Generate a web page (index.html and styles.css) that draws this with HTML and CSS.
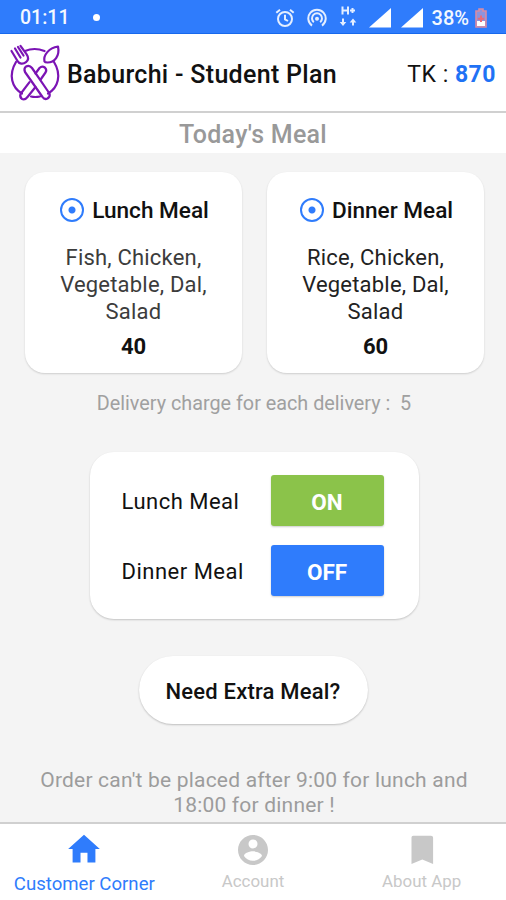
FILE: index.html
```html
<!DOCTYPE html>
<html lang="en">
<head>
    <meta charset="UTF-8">
    <meta name="viewport" content="width=device-width, initial-scale=1.0">
    <title>Baburchi - Student Plan</title>
    <link rel="stylesheet" href="styles.css">
</head>
<body>
    <div class="status-bar">
        <span class="time">01:11</span>
        <span class="dot"></span>
        <div class="status-icons">
            <svg class="alarm" width="20" height="20" viewBox="0 0 20 20" fill="none" stroke="#e4eeff" stroke-width="2">
                <circle cx="10" cy="11" r="7"/>
                <path d="M10 6.8V11.3L13 13M1.3 4.8L5 1.7M18.7 4.8L15 1.7"/>
            </svg>
            <svg class="hotspot" width="20" height="20" viewBox="0 0 20 20" fill="none" stroke="#e4eeff" stroke-width="2">
                <path d="M5 17.6A8.7 8.7 0 1 1 15 17.6"/>
                <path d="M6.8 14.2A5 5 0 1 1 13.2 14.2"/>
                <circle cx="10" cy="10.8" r="2" fill="#e4eeff" stroke="none"/>
            </svg>
            <svg class="network" width="20" height="22" viewBox="0 0 20 22" fill="none" stroke="#e4eeff" stroke-width="2">
                <path d="M4.5 1.5V9.500M10 1.5V9.500M4.500 5.500H10M12 5.500H17M14.500 3V8"/>
                <path d="M5 13.500V18M15 20.500V15"/>
                <path d="M1.700 17H8.300L5 21ZM11.700 17.500H18.300L15 13.500Z" fill="#e4eeff" stroke="none"/>
            </svg>
            <svg class="signal" width="22" height="20" viewBox="0 0 22 20">
                <path d="M0 19.500L22 0V19.500Z" fill="#fff"/>
            </svg>
            <svg class="signal" width="22" height="20" viewBox="0 0 22 20">
                <path d="M0 19.500L22 0V19.500Z" fill="#fff"/>
            </svg>
            <span class="percent">38%</span>
            <svg class="battery" width="12" height="20" viewBox="0 0 12 20">
                <path d="M1 3H4V1H8V3H11V19H1Z" fill="#8f93dc" stroke="#d98ba3" stroke-width="1.600"/>
                <path d="M2 13H10V18H2Z" fill="#fff"/>
                <path d="M6 7.500V14M2.800 10.700H9.200" stroke="#e96b78" stroke-width="2"/>
            </svg>
        </div>
    </div>

    <header class="header">
        <svg class="logo" width="52" height="58" viewBox="0 0 52 58" fill="none" stroke="#7b14b4" stroke-width="2.2" stroke-linecap="round" stroke-linejoin="round">
            <path d="M16 7Q25.500 3 35.500 7M7 18C-1 31 3 44 13 49.500M45 18C53 31 49 44 39 49.500M22 52.500Q26 53.500 31 52.500"/>
            <path d="M2.500 7L8.500 17C10 20 14 20.500 17 18.200C19.500 16.200 19.500 13 17.500 10.200L11.500 1.800M6 4.500L11.500 13.500M9 3L14.500 11.500"/>
            <path d="M35.500 17.500C34 11 40 4 49 2.500C51 12 45.500 18.500 38.500 18.500C37 18.500 36 18.500 35.500 17.500Z"/>
            <path d="M17 22.500Q20.500 20.500 23 24L40.500 49.500Q41.500 52.500 38.500 54.500Q35.500 56 33.500 53L16 28Q14.500 24.500 17 22.500Z"/>
            <path d="M26.500 29.500L30.500 24Q33 21.500 35.800 23.500Q38.300 26 36.500 28.500L32 35M20.500 38.200L11.500 50Q10.500 53 13 55Q16 56.300 18.500 53L26.500 43"/>
        </svg>
        <h1>Baburchi - Student Plan</h1>
        <div class="balance">TK : <b>870</b></div>
    </header>

    <h2 class="section-title"><span>Today's Meal</span></h2>

    <main>
        <div class="meals">
            <div class="meal-card">
                <h3><i class="radio"></i><span>Lunch Meal</span></h3>
                <p class="items">Fish, Chicken,<br>Vegetable, Dal,<br>Salad</p>
                <p class="price">40</p>
            </div>
            <div class="meal-card dinner">
                <h3><i class="radio"></i><span>Dinner Meal</span></h3>
                <p class="items">Rice, Chicken,<br>Vegetable, Dal,<br>Salad</p>
                <p class="price">60</p>
            </div>
        </div>

        <p class="delivery">Delivery charge for each delivery : &nbsp;5</p>

        <div class="switches">
            <div class="switch-row">
                <span>Lunch Meal</span>
                <button class="btn on">ON</button>
            </div>
            <div class="switch-row">
                <span>Dinner Meal</span>
                <button class="btn off">OFF</button>
            </div>
        </div>

        <button class="extra">Need Extra Meal?</button>

        <p class="notice">Order can't be placed after 9:00 for lunch and<br>18:00 for dinner !</p>
    </main>

    <nav class="tabs">
        <a class="tab active">
            <svg width="38" height="34" viewBox="0 0 24 24" preserveAspectRatio="none" fill="currentColor"><path d="M9.800 21.500v-6.800h4.400v6.800h5v-9.500h2.800L12 2 2 12h2.800v9.500z"/></svg>
            <span>Customer Corner</span>
        </a>
        <a class="tab">
            <svg width="36" height="36" viewBox="0 0 24 24" fill="currentColor"><path d="M12 2C6.480 2 2 6.480 2 12s4.480 10 10 10 10-4.480 10-10S17.520 2 12 2zm0 3c1.660 0 3 1.340 3 3s-1.340 3-3 3-3-1.340-3-3 1.340-3 3-3zm0 14.200c-2.500 0-4.710-1.280-6-3.220.030-1.990 4-3.080 6-3.080 1.990 0 5.970 1.090 6 3.080-1.290 1.940-3.500 3.220-6 3.220z"/></svg>
            <span>Account</span>
        </a>
        <a class="tab">
            <svg width="36" height="36" viewBox="0 0 24 24" fill="currentColor"><path d="M18 2.500H6.200c-.8 0-1.200.5-1.200 1.300V21.300l7.200-3 7.200 3V3.800c0-.8-.6-1.300-1.400-1.300z"/></svg>
            <span>About App</span>
        </a>
    </nav>
</body>
</html>
```
FILE: styles.css
```css
* {
    box-sizing: border-box;
}

body {
    display: flex;
    flex-direction: column;
    height: 900px;
    margin: 0;
    overflow: hidden;
    font-family: Roboto, sans-serif;
    background: #f4f4f4;
    color: #111;
    white-space: nowrap;
}

h1, h2, h3, p {
    margin: 0;
}

.status-bar {
    display: flex;
    align-items: center;
    height: 34px;
    padding: 2px 19px 0 20px;
    background: #2f7cfc;
    border-bottom: 1px solid #1768ec;
    color: #f3f8ff;
    font-size: 19.5px;
    font-weight: 500;
}

.dot {
    width: 7px;
    height: 7px;
    margin-left: 24px;
    border-radius: 50%;
    background: #fff;
}

.status-icons {
    display: flex;
    align-items: center;
    margin-left: auto;
}

.hotspot {
    margin-left: 12px;
}

.network {
    margin: -3px 0 0 11px;
}

.signal {
    margin-left: 10px;
}

.network + .signal {
    margin-left: 11px;
}

.percent {
    margin: 0 6px 0 9px;
    font-size: 20px;
}

.header {
    display: flex;
    align-items: center;
    height: 79px;
    padding: 0 10px 0 9px;
    background: #fff;
    border-bottom: 2px solid #d0d0d0;
}

.header h1 {
    margin: 3px 0 0 6px;
    font-size: 25px;
    font-weight: 500;
    letter-spacing: 0.3px;
}

.balance {
    margin: 3px 0 0 auto;
    font-size: 23px;
    letter-spacing: 0.5px;
}

.balance b {
    color: #1f72f5;
}

.section-title {
    height: 40px;
    background: #fff;
    color: #999;
    font-size: 25px;
    font-weight: 500;
    letter-spacing: 0.25px;
    line-height: 43px;
    text-align: center;
}

main {
    flex: 1;
    display: flex;
    flex-direction: column;
    align-items: center;
}

.meals {
    display: flex;
    gap: 25px;
    margin: 19px 0 0 3px;
}

.meal-card {
    width: 217px;
    height: 201px;
    padding-top: 22px;
    border-radius: 20px;
    background: #fff;
    box-shadow: 0 1px 2px rgba(0, 0, 0, 0.16);
    text-align: center;
}

.meal-card h3 {
    display: flex;
    align-items: center;
    justify-content: center;
    gap: 8px;
    height: 32px;
    padding-left: 2px;
    font-size: 22.6px;
    font-weight: 500;
}

.radio {
    width: 24px;
    height: 24px;
    border: 2px solid #2f7cfc;
    border-radius: 50%;
    background: radial-gradient(circle, #2f7cfc 3px, transparent 4px);
}

.items {
    margin-top: 19px;
    color: #3c3c3c;
    font-size: 22px;
    letter-spacing: 0.2px;
    line-height: 26.8px;
}

.dinner .items {
    color: #222;
}

.price {
    margin-top: 8px;
    font-size: 22px;
    font-weight: 700;
    line-height: 28px;
}

.delivery {
    margin: 18px 0 0 2px;
    color: #a0a0a0;
    font-size: 19.8px;
    line-height: 26px;
}

.switches {
    display: flex;
    flex-direction: column;
    gap: 19px;
    width: 329px;
    height: 167px;
    margin: 35px 0 0 2px;
    padding: 23px 35px 0 32px;
    border-radius: 24px;
    background: #fff;
    box-shadow: 0 1px 2px rgba(0, 0, 0, 0.2);
}

.switch-row {
    display: flex;
    align-items: center;
    justify-content: space-between;
    font-size: 22px;
    letter-spacing: 0.5px;
}

.switch-row span {
    padding-top: 2px;
}

button {
    border: none;
    font-family: inherit;
}

.btn {
    width: 113px;
    height: 51px;
    padding-top: 3px;
    border-radius: 3px;
    color: #fff;
    font-size: 22.5px;
    font-weight: 700;
    box-shadow: 0 1px 2px rgba(0, 0, 0, 0.2);
}

.on {
    background: #8bc34a;
}

.off {
    background: #2f7cfc;
}

.extra {
    width: 229px;
    height: 68px;
    margin-top: 37px;
    padding: 2px 0 0;
    border-radius: 34px;
    background: #fff;
    color: #111;
    font-size: 22px;
    font-weight: 500;
    letter-spacing: 0.2px;
    box-shadow: 0 1px 2px rgba(0, 0, 0, 0.22);
}

.notice {
    margin: 44px 0 0 2px;
    color: #9c9c9c;
    font-size: 21px;
    letter-spacing: 0.2px;
    line-height: 25px;
    text-align: center;
}

.tabs {
    display: grid;
    grid-template-columns: repeat(3, 1fr);
    height: 78px;
    border-top: 2px solid #d0d0d0;
    background: #fff;
}

.tab {
    display: flex;
    flex-direction: column;
    align-items: center;
    padding-top: 8px;
    color: #c8c8c8;
    font-size: 16.9px;
}

.tab span {
    margin-top: 1px;
    line-height: 24px;
}

.tab.active {
    color: #2f7cfc;
    font-size: 18.6px;
}

.tab.active span {
    margin-top: 6px;
}
```
